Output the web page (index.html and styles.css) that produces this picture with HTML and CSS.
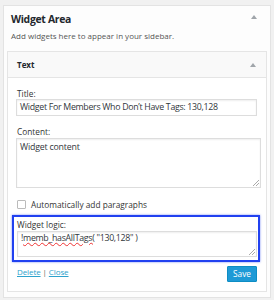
FILE: index.html
```html
<!DOCTYPE html>
<html>
<head>
<meta charset="utf-8">
<link rel="stylesheet" href="styles.css">
</head>
<body>
<div class="area">
  <div class="area-head">
    <h3 class="area-title">Widget Area</h3>
    <span class="tri"></span>
  </div>
  <p class="area-desc">Add widgets here to appear in your sidebar.</p>
  <div class="widget">
    <div class="widget-head">
      <h4 class="widget-title">Text</h4>
      <span class="tri"></span>
    </div>
    <div class="widget-body">
      <label class="lbl lbl-title">Title:</label>
      <div class="input">Widget For Members Who Don’t Have Tags: 130,128</div>
      <label class="lbl lbl-content">Content:</label>
      <div class="textarea ta-content">Widget content<span class="grip"></span></div>
      <div class="check-row">
        <span class="check"></span>
        <span class="check-label">Automatically add paragraphs</span>
      </div>
      <div class="logic">
        <label class="lbl lbl-logic">Widget logic:</label>
        <div class="textarea ta-logic">!<span class="spell">memb_hasAllTags(</span> "130,128" )<span class="grip"></span></div>
      </div>
      <div class="actions">
        <div class="links"><a class="link">Delete</a> <span class="sep">|</span> <a class="link">Close</a></div>
        <button class="save">Save</button>
      </div>
    </div>
  </div>
</div>
</body>
</html>
```

FILE: styles.css
```css
* { box-sizing: border-box; }
body {
  margin: 0;
  background: #f1f1f1;
  font-family: "Open Sans", "DejaVu Sans", sans-serif;
  color: #444;
}
.area {
  margin: 5px 3px 0;
  height: 293px;
  background: #fdfdfd;
  border: 1px solid #e3e3e3;
  padding: 0 3px;
}
.area-head {
  display: flex;
  justify-content: space-between;
  align-items: flex-start;
  padding: 6px 10px 0 4px;
  height: 23px;
}
.area-title {
  margin: 0;
  font-size: 10.4px;
  letter-spacing: -0.3px;
  font-weight: 700;
  color: #23282d;
  line-height: 14px;
}
.tri {
  width: 0;
  height: 0;
  margin-top: 3px;
  border-left: 3px solid transparent;
  border-right: 3px solid transparent;
  border-bottom: 4px solid #a0a5aa;
}
.area-desc {
  margin: 0 0 0 4px;
  font-size: 8px;
  letter-spacing: 0;
  line-height: 13px;
  color: #555;
}
.widget {
  margin-top: 9px;
  border: 1px solid #e5e5e5;
  background: #fff;
  height: 241px;
}
.widget-head {
  display: flex;
  justify-content: space-between;
  align-items: center;
  height: 26px;
  padding: 0 10px 0 9px;
  background: #f9f9f9;
  border-bottom: 1px solid #e5e5e5;
}
.widget-head .tri { margin-top: 0; }
.widget-title {
  margin: 0;
  font-size: 8px;
  font-weight: 700;
  color: #23282d;
}
.widget-body {
  padding: 0 0 0 8px;
}
.lbl {
  display: block;
  font-size: 8.3px;
  line-height: 10px;
  color: #333;
  padding-left: 1px;
}
.lbl-title { padding-top: 11px; }
.input {
  width: 241px;
  height: 17px;
  border: 1px solid #ddd;
  box-shadow: inset 0 1px 2px rgba(0,0,0,0.07);
  font-size: 8.8px;
  letter-spacing: -0.3px;
  line-height: 15px;
  padding-left: 3px;
  color: #32373c;
  white-space: nowrap;
}
.lbl-content { margin-top: 10.5px; margin-bottom: 1px; }
.textarea {
  position: relative;
  border: 1px solid #ddd;
  box-shadow: inset 0 1px 2px rgba(0,0,0,0.07);
  font-size: 8.8px;
  letter-spacing: -0.2px;
  line-height: 13px;
  padding: 2px 3px;
  color: #32373c;
  white-space: nowrap;
}
.ta-content { width: 245px; height: 50px; }
.grip {
  position: absolute;
  right: 1px;
  bottom: 1px;
  width: 6px;
  height: 6px;
  background: linear-gradient(135deg, transparent 45%, #aaa 45%, #aaa 55%, transparent 55%, transparent 70%, #aaa 70%, #aaa 80%, transparent 80%);
}
.check-row {
  display: flex;
  align-items: center;
  margin-top: 12px;
  height: 9px;
}
.check {
  width: 9px;
  height: 9px;
  margin-left: 1px;
  border: 1px solid #bbb;
  border-radius: 1px;
  background: #fff;
}
.check-label {
  margin-left: 5px;
  font-size: 8.3px;
  letter-spacing: 0;
  color: #333;
}
.logic {
  margin: 6px 0 0 -4px;
  width: 248px;
  height: 47px;
  border: 2px solid #2141f0;
  box-shadow: 0 0 2px rgba(30, 60, 240, 0.6);
  padding: 3px 1px 0 3px;
}
.lbl-logic { padding-left: 0; margin-bottom: 1px; }
.ta-logic { width: 240px; height: 26px; padding-top: 0; letter-spacing: -0.3px; }
.spell {
  text-decoration: underline wavy #e33;
  text-decoration-thickness: 1px;
  text-underline-offset: 1px;
}
.actions {
  display: flex;
  justify-content: space-between;
  align-items: flex-start;
  width: 241px;
  margin-top: 4px;
}
.links {
  font-size: 8px;
  letter-spacing: -0.1px;
  line-height: 11px;
  color: #666;
  padding-left: 1px;
}
.link {
  color: #2ea2cc;
  text-decoration: underline;
}
.sep { color: #666; }
.save {
  width: 30px;
  height: 16px;
  margin: 0;
  padding: 0;
  border: 1px solid #0d8dc4;
  border-radius: 1px;
  background: #1e9ad6;
  color: #fff;
  font-family: "Open Sans", "DejaVu Sans", sans-serif;
  font-size: 8.3px;
  line-height: 14px;
}
```
